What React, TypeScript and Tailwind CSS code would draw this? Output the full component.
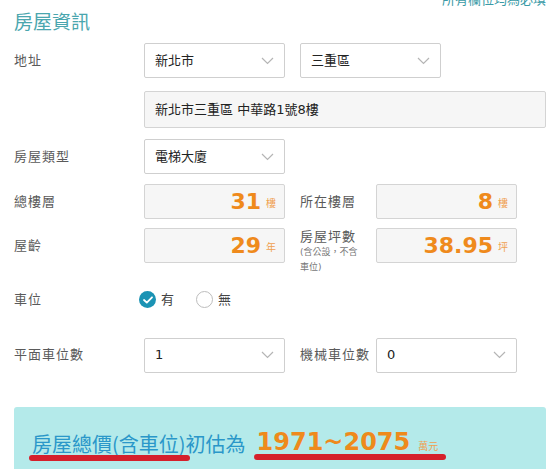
import { ReactNode } from 'react';

const font = { fontFamily: '"DejaVu Sans", "Noto Sans CJK TC", sans-serif' };

function Chevron() {
  return (
    <svg className="absolute right-[10px] top-1/2 -translate-y-1/2" width="13" height="8" viewBox="0 0 13 8" fill="none">
      <path d="M1 1l5.5 5.5L12 1" stroke="#b5b5b5" strokeWidth="1.2" />
    </svg>
  );
}

function Select({ value }: { value: string }) {
  return (
    <div className="relative w-[141px] h-[35px] border border-[#cfcfcf] rounded-[2px] bg-white flex items-center pl-[10px] text-[13px] text-[#222]">
      {value}
      <Chevron />
    </div>
  );
}

function NumBox({ value, unit }: { value: string; unit: string }) {
  return (
    <div className="w-[141px] h-[35px] border border-[#d4d4d4] rounded-[2px] bg-[#f6f6f6] flex items-center justify-end pr-[8px] gap-[5px] text-[#ef8a1c]">
      <span className="text-[22px] font-bold leading-none" style={{ fontFamily: '"DejaVu Sans", sans-serif' }}>{value}</span>
      <span className="text-[10px] mt-[3px] text-[#f0a050]">{unit}</span>
    </div>
  );
}

function Label({ children, w = 'w-[130px]' }: { children: ReactNode; w?: string }) {
  return <div className={`${w} text-[13px] text-[#5a5a5a] tracking-[1px] shrink-0`}>{children}</div>;
}

function Mark({ children }: { children: ReactNode }) {
  return (
    <span className="relative">
      {children}
      <span className="absolute left-[-3px] right-[-4px] bottom-[-3px] h-[6px] rounded-full bg-[#d5202b]" />
    </span>
  );
}

export default function App() {
  return (
    <div className="w-[553px] h-[469px] overflow-hidden bg-white pl-[14px] pr-[7px]" style={font}>
      <div className="text-right text-[13px] text-[#3a9aa6] leading-[16px] mt-[-8px]">所有欄位均為必填</div>
      <div className="text-[19px] text-[#4aa6ae] leading-[24px] mt-[2px]">房屋資訊</div>

      <div className="flex items-center mt-[9px]">
        <Label>地址</Label>
        <Select value="新北市" />
        <div className="ml-[15px]">
          <Select value="三重區" />
        </div>
      </div>
      <div className="flex mt-[13px]">
        <div className="w-[130px]" />
        <div className="flex-1 h-[37px] border border-[#d4d4d4] rounded-[2px] bg-[#f6f6f6] flex items-center pl-[10px] text-[13px] text-[#222]">
          新北市三重區 中華路1號8樓
        </div>
      </div>

      <div className="flex items-center mt-[11px]">
        <Label>房屋類型</Label>
        <Select value="電梯大廈" />
      </div>

      <div className="flex items-center mt-[10px]">
        <Label>總樓層</Label>
        <NumBox value="31" unit="樓" />
        <Label w="w-[76px] ml-[15px]">所在樓層</Label>
        <NumBox value="8" unit="樓" />
      </div>

      <div className="flex items-center mt-[9px]">
        <Label>屋齡</Label>
        <NumBox value="29" unit="年" />
        <div className="w-[76px] h-[35px] ml-[15px]">
          <div className="text-[13px] text-[#5a5a5a] tracking-[1px] leading-[16px] mt-[1px]">房屋坪數</div>
          <div className="text-[9px] text-[#777] leading-[15px] w-[64px]">(含公設，不含車位)</div>
        </div>
        <NumBox value="38.95" unit="坪" />
      </div>

      <div className="flex items-center mt-[27px]">
        <Label w="w-[125px]">車位</Label>
        <div className="flex items-center gap-[5px] text-[13px] text-[#444]">
          <span className="w-[17px] h-[17px] rounded-full bg-[#1b93b4] flex items-center justify-center">
            <svg width="10" height="8" viewBox="0 0 10 8" fill="none">
              <path d="M1 4l2.8 2.6L9 1.3" stroke="white" strokeWidth="1.8" strokeLinecap="round" strokeLinejoin="round" />
            </svg>
          </span>
          有
        </div>
        <div className="flex items-center gap-[5px] text-[13px] text-[#444] ml-[22px]">
          <span className="w-[17px] h-[17px] rounded-full border border-[#bdbdbd] bg-white" />
          無
        </div>
      </div>

      <div className="flex items-center mt-[28px]">
        <Label>平面車位數</Label>
        <Select value="1" />
        <Label w="w-[76px] ml-[15px]">機械車位數</Label>
        <Select value="0" />
      </div>

      <div className="mt-[34px] w-[532px] h-[70px] bg-[#b4eaea] rounded-[3px] pl-[18px] pt-[22px]">
        <div className="flex items-end whitespace-nowrap">
          <span className="text-[20px] text-[#2a97c9] leading-[26px]" style={{ fontFamily: '"Noto Sans CJK TC", sans-serif' }}>
            <Mark>房屋總價(含車位)</Mark>初估為
          </span>
          <span className="ml-[11px] relative">
            <span className="text-[24px] font-bold text-[#ee8a1c] leading-[26px]" style={{ fontFamily: '"DejaVu Sans", sans-serif' }}>1971~2075</span>
            <span className="text-[10px] text-[#f0a050] ml-[8px]">萬元</span>
            <span className="absolute left-[-3px] right-[-8px] bottom-[-3px] h-[6px] rounded-full bg-[#d5202b]" />
          </span>
        </div>
      </div>
    </div>
  );
}
